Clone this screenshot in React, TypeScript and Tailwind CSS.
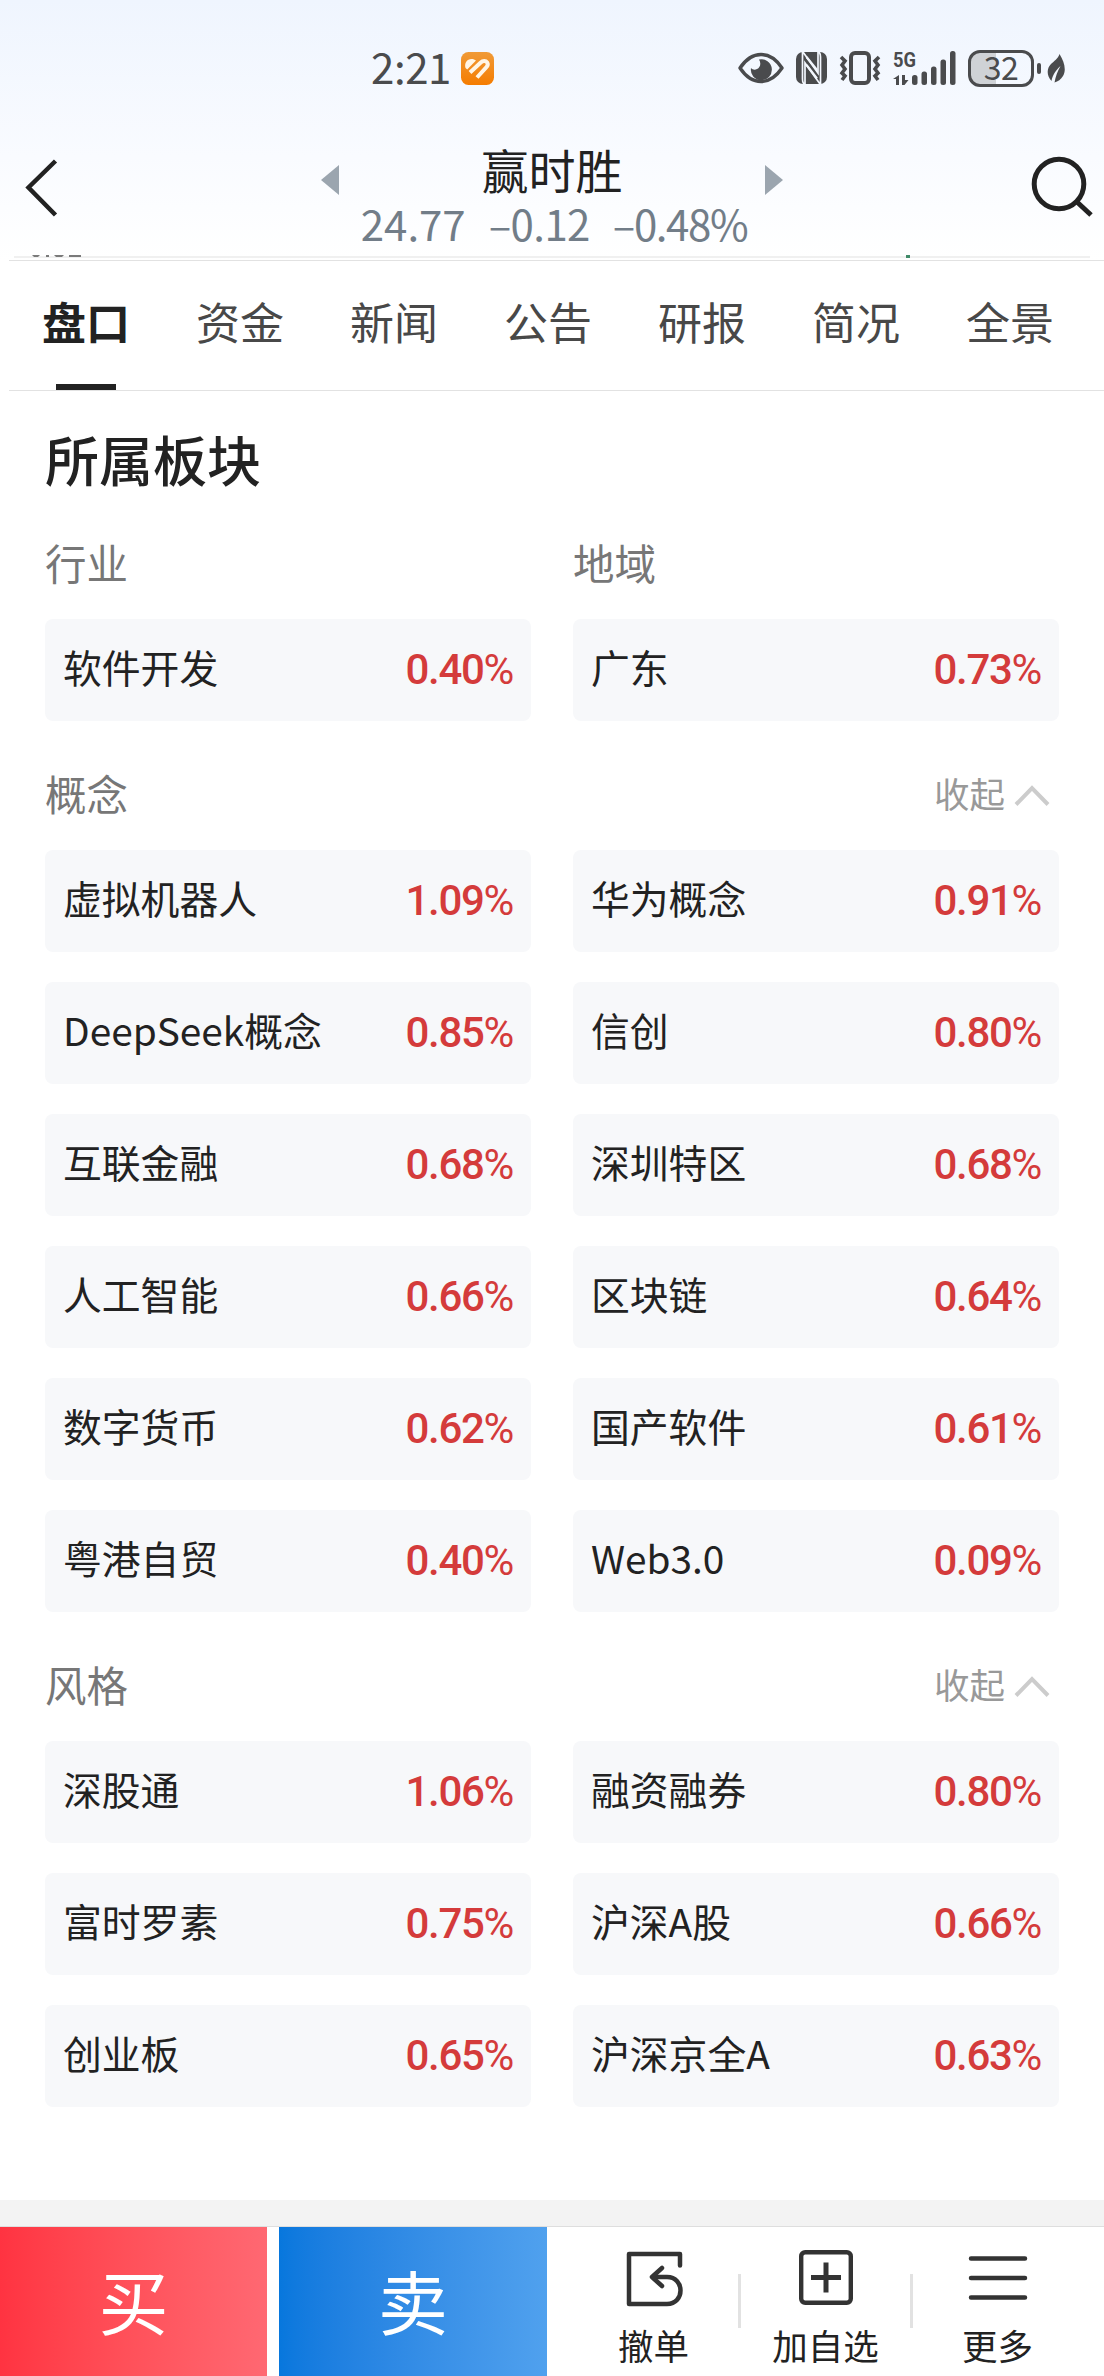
import type { ReactNode } from "react";

interface Sector {
  name: string;
  change: string;
}

const TABS = ["盘口", "资金", "新闻", "公告", "研报", "简况", "全景"];

const BASE: Sector[] = [
  { name: "软件开发", change: "0.40" },
  { name: "广东", change: "0.73" },
];

const CONCEPTS: Sector[] = [
  { name: "虚拟机器人", change: "1.09" },
  { name: "华为概念", change: "0.91" },
  { name: "DeepSeek概念", change: "0.85" },
  { name: "信创", change: "0.80" },
  { name: "互联金融", change: "0.68" },
  { name: "深圳特区", change: "0.68" },
  { name: "人工智能", change: "0.66" },
  { name: "区块链", change: "0.64" },
  { name: "数字货币", change: "0.62" },
  { name: "国产软件", change: "0.61" },
  { name: "粤港自贸", change: "0.40" },
  { name: "Web3.0", change: "0.09" },
];

const STYLES: Sector[] = [
  { name: "深股通", change: "1.06" },
  { name: "融资融券", change: "0.80" },
  { name: "富时罗素", change: "0.75" },
  { name: "沪深A股", change: "0.66" },
  { name: "创业板", change: "0.65" },
  { name: "沪深京全A", change: "0.63" },
];

function StatusBar() {
  return (
    <div className="flex h-[136px] items-center pr-[39px] pl-[371px] text-[#4a4b4d]">
      <span className="w-[90px] pb-[5px] text-[42px] leading-none tracking-[-0.4px]">2:21</span>
      <svg className="mt-[1px]" width="33" height="33" viewBox="0 0 33 33">
        <defs>
          <linearGradient id="app-badge" x1="0" y1="0" x2="0" y2="1">
            <stop offset="0" stopColor="#f09a37" />
            <stop offset="1" stopColor="#f57c00" />
          </linearGradient>
        </defs>
        <rect width="33" height="33" rx="7.5" fill="url(#app-badge)" />
        {/* heart made of two folded stripes */}
        <path d="M4.500 16C3 11 6 7 10.500 7c2 0 3.200.6 4.500 1.600L6.200 17.500z" fill="#fff5e6" />
        <path d="M9 20.500l10.500-9.800c2.500-2.300 5.300-2.200 6.600-.4 1.200 1.800.5 3.700-.9 5.100L16 25.500" fill="none" stroke="#fff5e6" strokeWidth="4" />
      </svg>

      <div className="ml-auto flex items-center">
        {/* eye comfort */}
        <svg width="46" height="32" viewBox="0 0 46 32" fill="none">
          <path d="M2 16C8 7 15 2.500 23 2.500S38 7 44 16C38 25 31 29.500 23 29.500S8 25 2 16z" stroke="currentColor" strokeWidth="3.400" strokeLinejoin="round" />
          <path d="M21 7.500a10.500 10.500 0 1 1-8 8.500c2 2.500 6 2 8-.5 2-2.700 1.500-5.500 0-8z" fill="currentColor" />
        </svg>
        {/* nfc */}
        <svg className="ml-[12px]" width="31" height="32" viewBox="0 0 31 32">
          <rect width="31" height="32" rx="7" fill="currentColor" />
          <path d="M6.500 0v27c0 3 1 5 2.500 5V11l15 21M24.500 32V5c0-3-1-5-2.500-5v21L7 0" fill="none" stroke="#f3f7fe" strokeWidth="1.700" />
          <path d="M10.500 13l10.500 13.500M10.500 5l10.500 13" stroke="#f3f7fe" strokeWidth="2.200" />
        </svg>
        {/* vibrate */}
        <svg className="ml-[12px]" width="42" height="34" viewBox="0 0 42 34" fill="none" stroke="currentColor">
          <rect x="12" y="2" width="18" height="30" rx="4" strokeWidth="4" />
          <path d="M2 6l4 4-3 4 3 4-3 4 3 3-3 4M40 6l-4 4 3 4-3 4 3 4-3 3 3 4" strokeWidth="3.600" />
        </svg>
        {/* mobile signal */}
        <svg className="ml-[12px] overflow-visible" width="63" height="34" viewBox="0 0 63 34" fill="currentColor">
          <text x="0" y="16" fontSize="21" fontWeight="700" textLength="23" lengthAdjust="spacingAndGlyphs" fontFamily="Roboto, sans-serif">5G</text>
          <path d="M6 24v10H3v-6H0zM9 24v10h2.500l4-5H12v-5z" />
          <rect x="19" y="24" width="5.500" height="10" rx="2.500" />
          <rect x="28.500" y="20.500" width="5.500" height="13.500" rx="2.500" />
          <rect x="38" y="15.500" width="5.500" height="18.500" rx="2.500" />
          <rect x="47.500" y="8.500" width="5.500" height="25.500" rx="2.500" />
          <rect x="57" y="0" width="5.500" height="34" rx="2.500" />
        </svg>
        {/* battery */}
        <div className="ml-[12px] flex h-[37px] w-[66px] items-center justify-center rounded-[12px] border-[3px] border-[#4a4b4d] bg-linear-to-r from-[#cfd2d6] from-[41%] to-transparent to-[41%] pb-[4px] text-[32px] leading-none tracking-[-0.500px]">
          32
        </div>
        <div className="ml-[3px] h-[11px] w-[4px] rounded-[2px] bg-[#4a4b4d]" />
        <svg className="ml-[6px]" width="18" height="29" viewBox="0 0 18 29" fill="currentColor">
          <path d="M12.500 0c5 8 7 16 3.500 22-2 3.500-5 5.500-8.500 6.500 1-6 3-11 6-16.500C9 16 5.500 21 4.500 27-1 21 0 14 4 10c3-3 7-5 8.500-10z" />
        </svg>
      </div>
    </div>
  );
}

function TitleBar() {
  return (
    <div className="flex h-[119px]">
      <div className="w-[321px] pt-[22px] pl-[24px]">
        <svg width="36" height="60" viewBox="0 0 36 60" fill="none">
          <path d="M31.500 3L4.500 29.500 31.500 57" stroke="#222" strokeWidth="4.500" />
        </svg>
      </div>
      <svg className="mt-[29px]" width="18" height="30" viewBox="0 0 18 30">
        <path d="M18 0v30L0 15z" fill="#9ba5af" />
      </svg>
      <div className="flex-1 pt-[7px] text-center whitespace-nowrap">
        <h1 className="text-[47px] leading-[52px] text-[#222]">赢时胜</h1>
        <div className="flex justify-center gap-[23px] pt-[2px] pl-[4px] text-[42px] leading-[52px] text-[#727d88]">
          <span>24.77</span>
          <span className="tracking-[-0.6px]">–0.12</span>
          <span className="tracking-[-1.4px]">–0.48%</span>
        </div>
      </div>
      <svg className="mt-[29px]" width="18" height="30" viewBox="0 0 18 30">
        <path d="M0 0v30l18-15z" fill="#9ba5af" />
      </svg>
      <div className="flex w-[321px] justify-end pt-[20px] pr-[10px]">
        <svg width="64" height="64" viewBox="0 0 64 64" fill="none" stroke="#222">
          <circle cx="29" cy="28" r="24.800" strokeWidth="5" />
          <path d="M46.500 45.500L61 59" strokeWidth="5" />
        </svg>
      </div>
    </div>
  );
}

// bottom edge of the chart that has scrolled under the title bar
function ChartEdge() {
  return (
    <svg className="block" width="1104" height="5" viewBox="0 0 1104 5">
      <path d="M14 2H1090" stroke="#f0f0f0" strokeWidth="2" />
      <path d="M32 0h8l-2 2h-4zM46 0h3v2h-3zM54 0h10l-2 2h-6zM69 0h12v2H69z" fill="#7a7a7a" />
      <path d="M906 0h4v3h-4z" fill="#3f8a68" />
    </svg>
  );
}

function Tabs() {
  return (
    <nav className="ml-[9px] flex h-[131px] border-y border-[#e2e2e2]">
      {TABS.map((tab, i) => (
        <div
          key={tab}
          className={
            i === 0
              ? "flex w-[154px] shrink-0 flex-col items-center text-[44px] font-bold text-[#222]"
              : "flex w-[154px] shrink-0 flex-col items-center text-[44px] text-[#484848]"
          }
        >
          <span className="leading-[120px]">{tab}</span>
          {i === 0 && <span className="mt-[3px] h-[6px] w-[60px] bg-[#222]" />}
        </div>
      ))}
    </nav>
  );
}

function SectorGrid({ items }: { items: Sector[] }) {
  return (
    <div className="grid grid-cols-2 gap-x-[42px] gap-y-[30px]">
      {items.map((item) => (
        <div key={item.name} className="flex h-[102px] items-center justify-between rounded-lg bg-[#f7f8fa] px-[18px]">
          <span className="pb-[8px] text-[38.800px] leading-[60px] text-[#222]">{item.name}</span>
          <span className="font-[Roboto,sans-serif] text-[42px] leading-[60px] font-medium tracking-[-1.300px] text-[#d43b3b]">
            {item.change}
            <span className="font-normal">%</span>
          </span>
        </div>
      ))}
    </div>
  );
}

function GroupTitle({ name }: { name: string }) {
  return (
    <div className="flex h-[129px] items-end justify-between pr-[9px] pb-[27px]">
      <h3 className="text-[41.500px] leading-[60px] text-[#777]">{name}</h3>
      <button className="flex items-center gap-[9px] text-[35.500px] leading-[60px] text-[#999]">
        收起
        <svg className="mt-[6px]" width="36" height="22" viewBox="0 0 36 22" fill="none">
          <path d="M2 19.500L18 3l16 16.500" stroke="#ccc" strokeWidth="4" />
        </svg>
      </button>
    </div>
  );
}

function BarAction({ label, children }: { label: string; children: ReactNode }) {
  return (
    <button className="flex w-[171px] flex-col items-center">
      <span className="flex h-[101px] items-center">{children}</span>
      <span className="text-[35.500px] leading-[34px] whitespace-nowrap text-[#222]">{label}</span>
    </button>
  );
}

function BottomBar() {
  return (
    <footer className="flex h-[150px] border-t border-[#dedede] bg-white">
      <button className="w-[267px] bg-linear-to-r from-[#ff3341] to-[#ff6872] pb-[5px] text-[70px] text-white">买</button>
      <button className="ml-[12px] w-[268px] bg-linear-to-r from-[#0777dd] to-[#50a1ee] pb-[5px] text-[70px] text-white">卖</button>
      <div className="ml-[21px] flex">
        <BarAction label="撤单">
          <svg className="mt-[3px] ml-[3px]" width="58" height="56" viewBox="0 0 58 56" fill="none" stroke="#333" strokeWidth="4.500" strokeLinecap="round" strokeLinejoin="round">
            <path d="M54 14.500V3H3v50h38c18 0 18-27 0-27H27" />
            <path d="M36 17L26 26l10 9" />
          </svg>
        </BarAction>
        <div className="-mx-px mt-[47px] h-[54px] w-[3px] bg-[#e2e2e2]" />
        <BarAction label="加自选">
          <svg width="54" height="55" viewBox="0 0 54 55" fill="none" stroke="#333">
            <rect x="2.200" y="2.200" width="49.600" height="50.600" rx="4" strokeWidth="4.400" />
            <path d="M12 27.500h30M27 12.500v30" strokeWidth="5" />
          </svg>
        </BarAction>
        <div className="-mx-px mt-[47px] h-[54px] w-[3px] bg-[#e2e2e2]" />
        <BarAction label="更多">
          <svg width="60" height="46" viewBox="0 0 60 46" stroke="#333" strokeWidth="4.500" strokeLinecap="round">
            <path d="M3 3.500h54M3 23h54M3 42.500h54" />
          </svg>
        </BarAction>
      </div>
    </footer>
  );
}

export default function App() {
  return (
    <div className="flex h-[2376px] w-[1104px] flex-col overflow-hidden bg-white font-['Noto_Sans_CJK_SC',sans-serif]">
      <header className="bg-linear-to-b from-[#eff5fe] via-[#f9fbff] via-60% to-white">
        <StatusBar />
        <TitleBar />
        <ChartEdge />
      </header>
      <Tabs />
      <main className="flex-1 px-[45px] pt-[28px]">
        <h2 className="text-[54px] leading-[80px] font-medium text-[#222]">所属板块</h2>
        <div className="grid h-[120px] grid-cols-2 items-end gap-x-[42px] pb-[27px] text-[41.500px] leading-[60px] text-[#777]">
          <h3>行业</h3>
          <h3>地域</h3>
        </div>
        <SectorGrid items={BASE} />
        <GroupTitle name="概念" />
        <SectorGrid items={CONCEPTS} />
        <GroupTitle name="风格" />
        <SectorGrid items={STYLES} />
      </main>
      <div className="h-[26px] bg-[#f3f3f3]" />
      <BottomBar />
    </div>
  );
}
